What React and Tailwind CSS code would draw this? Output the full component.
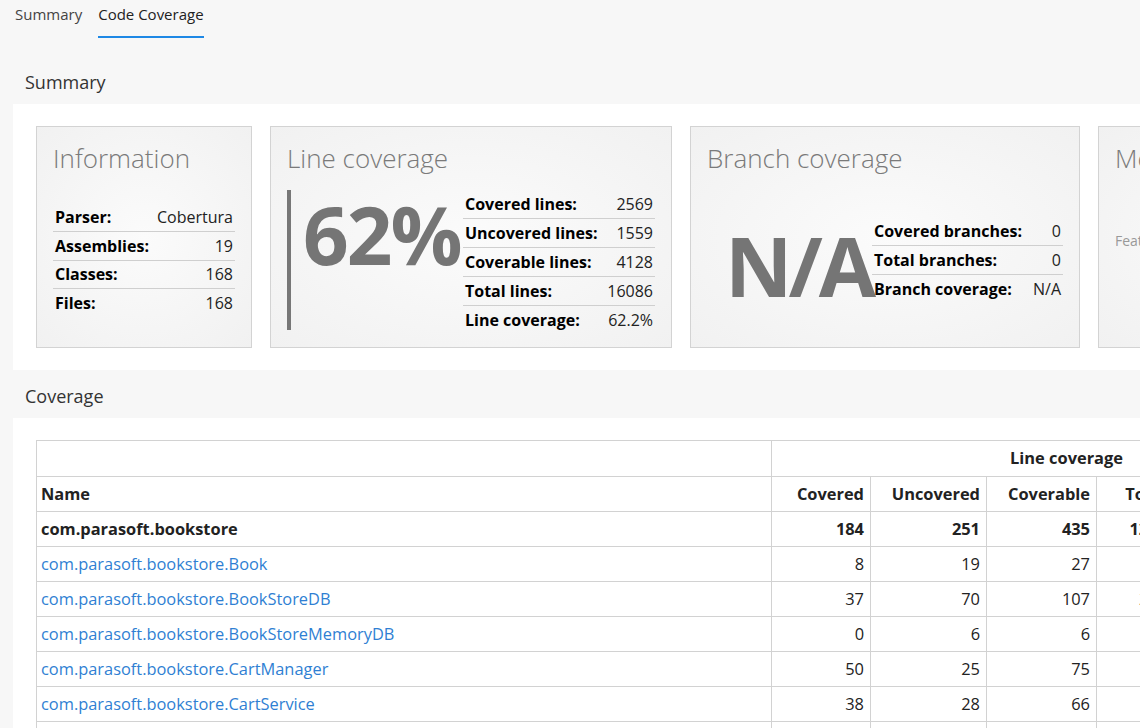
import React from "react";

const infoRows = [
  ["Parser:", "Cobertura"],
  ["Assemblies:", "19"],
  ["Classes:", "168"],
  ["Files:", "168"],
];

const lineRows = [
  ["Covered lines:", "2569"],
  ["Uncovered lines:", "1559"],
  ["Coverable lines:", "4128"],
  ["Total lines:", "16086"],
  ["Line coverage:", "62.2%"],
];

const branchRows = [
  ["Covered branches:", "0"],
  ["Total branches:", "0"],
  ["Branch coverage:", "N/A"],
];

const classes = [
  ["com.parasoft.bookstore.Book", 8, 19, 27, "87"],
  ["com.parasoft.bookstore.BookStoreDB", 37, 70, 107, "215"],
  ["com.parasoft.bookstore.BookStoreMemoryDB", 0, 6, 6, "22"],
  ["com.parasoft.bookstore.CartManager", 50, 25, 75, "154"],
  ["com.parasoft.bookstore.CartService", 38, 28, 66, "120"],
  ["com.parasoft.bookstore.CartItem", 12, 4, 16, "48"],
];

function StatTable({ rows, width }) {
  return (
    <table className={`${width} shrink-0 border-collapse text-[16px]`}>
      <tbody>
        {rows.map(([label, value], i) => (
          <tr
            key={label}
            className={i < rows.length - 1 ? "border-b border-[#cfcfcf]" : ""}
          >
            <th className="h-[28.75px] px-[2px] text-left font-bold text-black">
              {label}
            </th>
            <td className="h-[28.75px] px-[2px] text-right text-[#222]">{value}</td>
          </tr>
        ))}
      </tbody>
    </table>
  );
}

function Card({ title, width, children }) {
  return (
    <div
      className={`${width} h-[222px] shrink-0 border border-[#d3d3d3] bg-[radial-gradient(ellipse_at_center,#fbfbfb,#f1f1f1)] px-[16px] pt-[15px]`}
    >
      <h3 className="whitespace-nowrap text-[26px] leading-[32px] font-light text-[#7a7a7a]">
        {title}
      </h3>
      <div className="mt-[16px] flex h-[140px] items-center">{children}</div>
    </div>
  );
}

const cell = "border border-[#d2d2d2]";

export default function App() {
  return (
    <div className="h-[728px] w-[1140px] overflow-hidden bg-[#f7f7f7] font-['Open_Sans',sans-serif] text-[#222]">
      <div className="flex gap-[16px] pl-[15px] text-[15px]">
        <div className="h-[38px] pt-[4px] leading-[20px] text-[#444]">Summary</div>
        <div className="h-[38px] border-b-2 border-[#1e88e5] pt-[4px] leading-[20px] text-[#222]">
          Code Coverage
        </div>
      </div>

      <h2 className="px-[25px] pt-[32px] pb-[10px] text-[18px] leading-[24px] text-[#333]">
        Summary
      </h2>
      <div className="ml-[13px] flex gap-[18px] overflow-hidden bg-white py-[22px] pl-[23px]">
        <Card title="Information" width="w-[216px]">
          <StatTable rows={infoRows} width="w-full" />
        </Card>
        <Card title="Line coverage" width="w-[402px]">
          <div className="flex h-[140px] w-full">
            <div className="flex-1 border-l-4 border-[#777]">
              <div className="pl-[12px] text-[80px] leading-[88px] font-bold tracking-[-2px] text-[#757575]">
                62%
              </div>
            </div>
            <div className="self-start">
              <StatTable rows={lineRows} width="w-[192px]" />
            </div>
          </div>
        </Card>
        <Card title="Branch coverage" width="w-[390px]">
          <div className="flex w-full items-center justify-end">
            <div className="mt-[10px] text-[83px] leading-[90px] font-bold tracking-[-4px] text-[#757575]">
              N/A
            </div>
            <StatTable rows={branchRows} width="w-[191px]" />
          </div>
        </Card>
        <Card title="Method coverage" width="w-[320px]">
          <p className="self-start pt-[40px] text-[14px] text-[#999]">
            Feature is only available for sponsors
          </p>
        </Card>
      </div>

      <h2 className="px-[25px] pt-[14px] pb-[10px] text-[18px] leading-[24px] text-[#333]">
        Coverage
      </h2>
      <div className="ml-[13px] overflow-hidden bg-white pt-[22px] pl-[23px]">
        <table className="w-[1400px] table-fixed border-collapse text-[16.4px]">
          <colgroup>
            <col className="w-[735px]" />
            <col className="w-[99px]" />
            <col className="w-[116px]" />
            <col className="w-[110px]" />
            <col className="w-[77px]" />
            <col className="w-[188px]" />
            <col className="w-[75px]" />
          </colgroup>
          <thead>
            <tr className="h-[36px]">
              <th className={cell} />
              <th colSpan={5} className={`${cell} text-center font-bold`}>
                Line coverage
              </th>
              <th className={cell} />
            </tr>
            <tr className="h-[35px]">
              <th className={`${cell} px-[4px] text-left font-bold`}>Name</th>
              <th className={`${cell} px-[6px] text-right font-bold`}>Covered</th>
              <th className={`${cell} px-[6px] text-right font-bold`}>Uncovered</th>
              <th className={`${cell} px-[6px] text-right font-bold`}>Coverable</th>
              <th className={`${cell} px-[6px] text-right font-bold`}>Total</th>
              <th className={`${cell} px-[6px] text-left font-bold`}>Percentage</th>
              <th className={cell} />
            </tr>
          </thead>
          <tbody>
            <tr className="h-[35px] font-bold">
              <td className={`${cell} px-[4px]`}>com.parasoft.bookstore</td>
              <td className={`${cell} px-[6px] text-right`}>184</td>
              <td className={`${cell} px-[6px] text-right`}>251</td>
              <td className={`${cell} px-[6px] text-right`}>435</td>
              <td className={`${cell} px-[6px] text-right`}>1248</td>
              <td className={`${cell} px-[6px]`} />
              <td className={cell} />
            </tr>
            {classes.map(([name, covered, uncovered, coverable, total]) => (
              <tr key={name} className="h-[35px]">
                <td className={`${cell} px-[4px] text-[#2f7fd3]`}>{name}</td>
                <td className={`${cell} px-[6px] text-right`}>{covered}</td>
                <td className={`${cell} px-[6px] text-right`}>{uncovered}</td>
                <td className={`${cell} px-[6px] text-right`}>{coverable}</td>
                <td className={`${cell} px-[6px] text-right`}>{total}</td>
                <td className={cell} />
                <td className={cell} />
              </tr>
            ))}
          </tbody>
        </table>
      </div>
    </div>
  );
}
